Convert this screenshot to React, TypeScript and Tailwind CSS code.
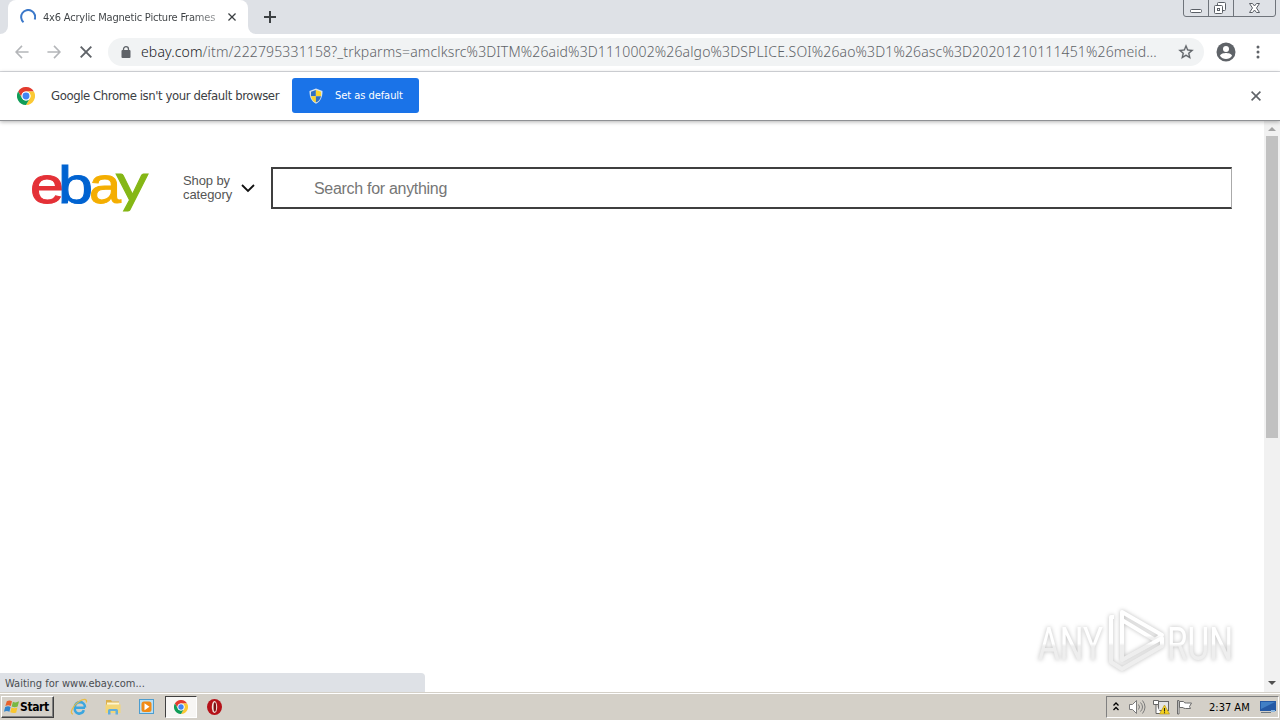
import type { ReactNode } from 'react';

interface IconProps {
  className?: string;
}

const TAHOMA = "font-['DejaVu_Sans_Condensed','Noto_Sans',sans-serif]";

function ChromeLogo({ className }: IconProps) {
  const blade = 'M22.4 6A12 12 0 0 0 1.6 6L6.8 15A6 6 0 0 1 12 6Z';
  return (
    <svg viewBox="0 0 24 24" className={className}>
      <path d={blade} fill="#e33b2e" />
      <path d={blade} fill="#fbc934" transform="rotate(120 12 12)" />
      <path d={blade} fill="#109d58" transform="rotate(240 12 12)" />
      <circle cx="12" cy="12" r="6" fill="#fff" />
      <circle cx="12" cy="12" r="4.6" fill="#4285f4" />
    </svg>
  );
}

function Cross({ className }: IconProps) {
  return (
    <svg viewBox="0 0 12 12" className={className} fill="none" stroke="currentColor" strokeWidth="1.9">
      <path d="M.7.7l10.600 10.600M11.300.7L.7 11.300" />
    </svg>
  );
}

function Arrow({ className }: IconProps) {
  return (
    <svg viewBox="0 0 16 16" className={className} fill="none" stroke="currentColor" strokeWidth="1.8">
      <path d="M15.500 8H2M8 1L1.200 8L8 15" />
    </svg>
  );
}

function Shield() {
  return (
    <svg viewBox="0 0 16 16" className="h-4 w-4">
      <path d="M8 .5L14.500 3C14.600 9 12.500 13.500 8 15.800C3.500 13.500 1.400 9 1.500 3Z" fill="#d9e4ee" />
      <path d="M7.900 2L3 3.700L2.900 8.200H7.900Z" fill="#2f6fc4" />
      <path d="M7.900 2L13 3.700L13.100 8.200H7.900Z" fill="#fbd42c" />
      <path d="M7.900 8.200H3C3.600 11.200 5 13.200 7.900 14.500Z" fill="#fbd42c" />
      <path d="M7.900 8.200H13C12.400 11.200 11 13.200 7.900 14.500Z" fill="#2f6fc4" />
    </svg>
  );
}

function WindowControls() {
  return (
    <svg viewBox="0 0 94 18" className="h-[18px] w-[94px]" fill="none" stroke="#6f747b">
      <path d="M.5 0V14Q.5 16.500 3 16.500H90Q92.500 16.500 92.500 14V0M25.500 0V16M50.500 0V16" />
      <rect x="7.500" y="9.500" width="11" height="3" rx="1" fill="#fff" stroke="#5a5f66" />
      <g stroke="#5a5f66" fill="#fff">
        <rect x="34.500" y="2.500" width="8" height="8" rx="1" />
        <rect x="31.500" y="5.500" width="8" height="8" rx="1" />
        <rect x="34.500" y="8.500" width="2" height="2" />
      </g>
      <path d="M66.500 3.500h3l2 2.500 2-2.500h3l-3 4.500 3 4.500h-3l-2-2.500-2 2.500h-3l3-4.500z" fill="#fff" stroke="#5a5f66" />
    </svg>
  );
}

function TabStrip() {
  return (
    <div className="flex h-[34px] shrink-0 justify-between bg-[#dee1e6]">
      <div className="flex">
        <div className="w-2 bg-white">
          <div className="h-full rounded-br-lg bg-[#dee1e6]" />
        </div>
        <div className="flex w-60 items-center rounded-t-lg bg-white pl-3">
          <svg viewBox="0 0 16 16" className="h-4 w-4" fill="none" stroke="#3b78c9" strokeWidth="2">
            <path d="M3.500 13.200A7 7 0 1 1 14.700 10.500" />
          </svg>
          <span className={`mt-0.5 ml-[7px] w-[185px] bg-linear-to-r from-[#3c4043] from-80% to-[#a0a2a4] to-94% bg-clip-text text-[11px] tracking-[-0.2px] whitespace-nowrap text-transparent ${TAHOMA}`}>
            4x6 Acrylic Magnetic Picture Frames
          </span>
          <Cross className="h-2 w-2 text-[#3c4043]" />
        </div>
        <div className="w-2 bg-white">
          <div className="h-full rounded-bl-lg bg-[#dee1e6]" />
        </div>
        <svg viewBox="0 0 12 12" className="mt-[11px] ml-2 h-3 w-3" stroke="#3c4043" strokeWidth="2">
          <path d="M0 6h12M6 0v12" />
        </svg>
      </div>
      <div className="mr-[3px]">
        <WindowControls />
      </div>
    </div>
  );
}

function Toolbar() {
  return (
    <div className="flex h-[38px] shrink-0 items-center border-b border-[#dadce0] bg-white pb-px">
      <Arrow className="ml-[15px] h-3.5 w-3.5 text-[#b4b6b9]" />
      <Arrow className="ml-[18px] h-3.5 w-3.5 rotate-180 text-[#b4b6b9]" />
      <Cross className="ml-[19px] h-3 w-3 text-[#5f6368]" />
      <div className="ml-4 flex h-7 w-[1096px] items-center rounded-full bg-[#f1f3f4]">
        <svg viewBox="0 0 10 12" className="ml-[13px] h-3 w-2.5">
          <rect x="0.500" y="4" width="9" height="8" rx="1" fill="#5f6368" />
          <path d="M2.500 5V3.200a2.500 2.500 0 0 1 5 0V5" fill="none" stroke="#5f6368" strokeWidth="1.300" />
        </svg>
        <span className="mb-px ml-[10px] w-[1024px] font-['Noto_Sans',sans-serif] text-[14px] font-light tracking-[0.14px] whitespace-nowrap text-[#5f6368]">
          <span className="text-[#202124]">ebay.com</span>
          /itm/222795331158?_trkparms=amclksrc%3DITM%26aid%3D1110002%26algo%3DSPLICE.SOI%26ao%3D1%26asc%3D20201210111451%26meid...
        </span>
        <svg viewBox="0 0 24 24" className="ml-3 h-[18px] w-[18px]" fill="#5f6368" stroke="#5f6368" strokeWidth=".3">
          <path d="M22 9.240l-7.190-.62L12 2 9.190 8.630 2 9.240l5.460 4.730L5.820 21 12 17.270 18.180 21l-1.630-7.030L22 9.240zM12 15.400l-3.760 2.270 1-4.280-3.320-2.880 4.380-.38L12 6.100l1.710 4.040 4.380.38-3.320 2.880 1 4.280L12 15.400z" />
        </svg>
      </div>
      <svg viewBox="0 0 20 20" className="ml-3 h-5 w-5">
        <circle cx="10" cy="10" r="9.500" fill="#5f6368" />
        <circle cx="10" cy="7" r="3" fill="#fff" />
        <path d="M4 13.800C4.500 11.600 8 11 10 11s5.500.6 6 2.800C14.500 16 12.500 17 10 17s-4.500-1-6-3.200z" fill="#fff" />
      </svg>
      <svg viewBox="0 0 4 14" className="ml-5 h-3.5 w-1" fill="#5f6368">
        <circle cx="2" cy="2" r="1.500" />
        <circle cx="2" cy="7" r="1.500" />
        <circle cx="2" cy="12" r="1.500" />
      </svg>
    </div>
  );
}

function InfoBar() {
  return (
    <div className="relative z-10 flex h-[49px] shrink-0 items-center border-b border-[#8f9194] bg-white pb-px shadow-[0_1px_4px_rgba(0,0,0,0.3)]">
      <ChromeLogo className="mt-px ml-[17px] h-[18px] w-[18px]" />
      <span className={`ml-4 w-[241px] text-[13px] tracking-[-0.41px] whitespace-nowrap text-[#3c4043] ${TAHOMA}`}>
        Google Chrome isn't your default browser
      </span>
      <button className={`flex h-[35px] w-[127px] items-center rounded-[3px] bg-[#1a73e8] pl-4 text-[11px] tracking-[-0.05px] text-white ${TAHOMA}`}>
        <Shield />
        <span className="mt-0.5 ml-[11px] whitespace-nowrap">Set as default</span>
      </button>
      <Cross className="mt-px mr-[19px] ml-auto h-2.5 w-2.5 text-[#5f6368]" />
    </div>
  );
}

function EbayLogo() {
  return (
    <svg viewBox="-4 -16 128 78" className="h-[78px] w-[128px] font-['Liberation_Sans',sans-serif] text-[52px]" strokeWidth="1">
      <text x="-2" y="40.500" textLength="34" lengthAdjust="spacingAndGlyphs" fill="#e43137" stroke="#e43137">e</text>
      <text x="26" y="40.500" textLength="35" lengthAdjust="spacingAndGlyphs" fill="#0063d1" stroke="#0063d1">b</text>
      <text x="57" y="40.500" textLength="32" lengthAdjust="spacingAndGlyphs" fill="#f4ae01" stroke="#f4ae01">a</text>
      <text x="83.500" y="40" textLength="33" lengthAdjust="spacingAndGlyphs" fill="#85b716" stroke="#85b716" className="font-['Lato',sans-serif] text-[54px]">y</text>
    </svg>
  );
}

function AnyRunMark() {
  return (
    <div className="absolute top-[485px] left-[1034px]">
      <svg viewBox="0 0 210 74" className="h-[74px] w-[210px] drop-shadow-[0_0_2px_rgba(0,0,0,0.26)]">
        <defs>
          <linearGradient id="mark" x1="0" y1="0" x2="0" y2="1">
            <stop offset="0.5" stopColor="#ffffff" />
            <stop offset="0.55" stopColor="#eeeeee" />
          </linearGradient>
        </defs>
        <g className="font-['Roboto',sans-serif] text-[47px]" fill="url(#mark)">
          <text x="4" y="54" textLength="65" lengthAdjust="spacingAndGlyphs">ANY</text>
          <text x="133" y="54" textLength="66" lengthAdjust="spacingAndGlyphs">RUN</text>
        </g>
        <g fill="none" stroke="url(#mark)" strokeWidth="4" strokeLinejoin="round">
          <path d="M88 53V6L128 29L121 34L88 14" />
          <path d="M80 11H77V56L88 63L128 40V32L88 54V14" />
        </g>
      </svg>
    </div>
  );
}

function Scrollbar() {
  return (
    <div className="flex w-4 shrink-0 flex-col items-center bg-[#f1f1f1]">
      <svg viewBox="0 0 16 15" className="h-[15px] w-4" fill="#a3a3a3">
        <path d="M4 10h8L8 6z" />
      </svg>
      <div className="h-[302px] w-3 bg-[#c1c1c1]" />
      <svg viewBox="0 0 16 16" className="mt-auto h-4 w-4" fill="#505050">
        <path d="M4 5h8l-4 4z" />
      </svg>
    </div>
  );
}

function Page() {
  return (
    <div className="relative flex min-h-0 flex-1 bg-white">
      <div className="flex flex-1 flex-col justify-between">
        <div className="flex items-start pt-[25px] pl-7">
          <EbayLogo />
          <div className="mt-[28px] ml-[27px] w-[50px] font-['Liberation_Sans',sans-serif] text-[13px] leading-[14px] tracking-[-0.1px] text-[#555]">
            Shop by category
          </div>
          <svg viewBox="0 0 14 9" className="mt-[38px] ml-[8px] h-[9px] w-3.5" fill="none" stroke="#111" strokeWidth="1.800">
            <path d="M1 1l6 6 6-6" />
          </svg>
          <div className="mt-[21px] ml-[16px] flex h-[42px] w-[961px] items-center border-2 border-r border-[#3f3f3f] border-r-[#aaa] pt-0.5 pl-[41px] font-['Liberation_Sans',sans-serif] text-[16px] tracking-[-0.3px] text-[#767676]">
            Search for anything
          </div>
        </div>
        <div className={`flex h-[19px] w-[425px] items-center rounded-tr bg-[#dee1e6] pt-[3px] pl-[5px] text-[11px] whitespace-nowrap text-[#4a4d51] ${TAHOMA}`}>
          Waiting for www.ebay.com...
        </div>
      </div>
      <Scrollbar />
      <AnyRunMark />
    </div>
  );
}

function WindowsFlag() {
  return (
    <svg viewBox="0 0 18 16" className="h-4 w-[17px]">
      <path d="M4 2Q7 0 9.500 2L8.300 7Q5.500 5.500 2.500 7Z" fill="#e8622c" />
      <path d="M10.500 2.500Q13.500 4 17 2L15.500 7.500Q12.500 9 9.200 7.500Z" fill="#78b843" />
      <path d="M2.300 8Q5.500 6.500 8 8L6.800 13Q4 11.500 1 13Z" fill="#3285cd" />
      <path d="M9 8.500Q12 10 15.200 8.500L14 13.800Q11 15 7.700 13.500Z" fill="#f9c62e" />
    </svg>
  );
}

function ExplorerIcon() {
  return (
    <svg viewBox="0 0 18 18" className="h-[18px] w-[18px]" fill="none">
      <path d="M15 9.800H5A4.500 4.500 0 0 0 13.800 12.200M4.800 9A5 5 0 0 1 15 9.500" stroke="#3ba6df" strokeWidth="2.600" />
      <path d="M3 16C-1 16 3 7 9 3.500C14 .5 17.500.8 16.300 4.500" stroke="#e8bd47" strokeWidth="1.300" />
    </svg>
  );
}

function FolderIcon() {
  return (
    <svg viewBox="0 0 18 18" className="h-[18px] w-[18px]">
      <path d="M2 2h5l1 1.500h7V15H2z" fill="#dcb04c" />
      <path d="M3 4.500h12V9H3z" fill="#fff6cf" />
      <path d="M1.500 6.500h15V15h-15z" fill="#f3d678" />
      <path d="M4 16.500V12.500Q4 11 5.500 11h7Q14 11 14 12.500v4h-2.500V13h-5v3.500z" fill="#62aedb" />
    </svg>
  );
}

function MediaIcon() {
  return (
    <svg viewBox="0 0 18 18" className="h-[18px] w-[18px]">
      <rect x="1.500" y="1.500" width="14" height="14" fill="#b9dff3" stroke="#4d9dcf" />
      <rect x="3.500" y="3.500" width="10" height="10.500" rx="2.500" fill="#f18a15" />
      <path d="M6.500 5.200v7l5-3.500z" fill="#fff" />
    </svg>
  );
}

function OperaIcon() {
  return (
    <svg viewBox="0 0 18 18" className="h-[18px] w-[18px]">
      <ellipse cx="8.500" cy="9" rx="7.500" ry="8" fill="#b51219" />
      <ellipse cx="8.500" cy="9" rx="2.700" ry="6" fill="#f4e4de" />
      <ellipse cx="8.800" cy="9" rx="1.300" ry="4.800" fill="#7c1316" />
    </svg>
  );
}

interface TaskItem {
  name: string;
  icon: ReactNode;
  active?: boolean;
}

const TASKS: TaskItem[] = [
  { name: 'explorer', icon: <ExplorerIcon /> },
  { name: 'folder', icon: <FolderIcon /> },
  { name: 'media', icon: <MediaIcon /> },
  { name: 'chrome', icon: <ChromeLogo className="h-3.5 w-3.5" />, active: true },
  { name: 'opera', icon: <OperaIcon /> },
];

function Tray() {
  return (
    <div className="mr-px flex h-[22px] w-[173px] items-center border border-t-[#808080] border-r-white border-b-white border-l-[#808080] pl-[6px]">
      <svg viewBox="0 0 6 9" className="mb-0.5 h-[9px] w-[6px]" fill="none" stroke="#000" strokeWidth="1.300">
        <path d="M.5 3.500L3 1l2.500 2.500M.5 8L3 5.500 5.500 8" />
      </svg>
      <svg viewBox="0 0 17 16" className="ml-2.5 h-4 w-[17px]" fill="none" stroke="#7b7b7b">
        <path d="M.5 5.500h3L7.500 1.500v13L3.500 10.500h-3z" fill="#fff" />
        <path d="M9.500 5.500q2 2.500 0 5M11.500 3.500q4 4.500 0 9M13.500 1.500q5 6.500 0 13" />
      </svg>
      <svg viewBox="0 0 17 16" className="ml-[7px] h-4 w-[17px]">
        <rect x="5.500" y="2.500" width="10" height="9" fill="#e4e4e4" stroke="#666" />
        <path d="M.5 1.500h5v4h-5zM3 5.500V14.500h5" fill="#fff" stroke="#666" />
        <path d="M11.500 6L16.500 15H6.500z" fill="#f5d21f" stroke="#ac8d17" strokeWidth=".6" />
        <path d="M11.500 9v3.500M11.500 13.300v1" stroke="#222" strokeWidth="1.100" />
      </svg>
      <svg viewBox="0 0 17 16" className="ml-[7px] h-4 w-[17px]" fill="#fff" stroke="#6b6b6b">
        <path d="M.5 1.500H2V15H.5zM2.500 2.500h4q1 2 3 1.500h5l-2 3.500 1 2h-5q-2 0-2.500-1h-3.500z" />
      </svg>
      <span className={`mt-0.5 ml-[15px] w-[51px] text-[11px] whitespace-nowrap text-black ${TAHOMA}`}>2:37 AM</span>
      <svg viewBox="0 0 16 14" className="h-3.5 w-4">
        <path d="M0 1h16v10H0z" fill="#2459a5" />
        <path d="M1 2h14L1 9z" fill="#407fc5" />
        <path d="M1 12h10v1H1z" fill="#6c7780" />
        <path d="M11 10h4v2h-4z" fill="#8eb8df" />
      </svg>
    </div>
  );
}

function Taskbar() {
  return (
    <div className="flex h-7 shrink-0 items-center justify-between border-t border-[#d4d0c8] bg-[#d4d0c8] pt-px shadow-[inset_0_1px_0_#fff]">
      <div className="flex items-center">
        <button className={`ml-px flex h-[22px] w-[53px] items-center border border-t-white border-r-[#404040] border-b-[#404040] border-l-white pl-px text-[12px] font-bold tracking-[-0.4px] text-black shadow-[inset_-1px_-1px_0_#808080] ${TAHOMA}`}>
          <WindowsFlag />
          Start
        </button>
        <div className="ml-[9px] flex items-center gap-0.5">
          {TASKS.map(t => (
            <div
              key={t.name}
              className={`flex h-[22px] w-8 items-center justify-center ${
                t.active ? 'border border-t-[#404040] border-r-white border-b-white border-l-[#404040] bg-[#f7f6f4]' : ''
              }`}
            >
              {t.icon}
            </div>
          ))}
        </div>
      </div>
      <Tray />
    </div>
  );
}

export default function App() {
  return (
    <div className="flex h-screen w-full flex-col overflow-hidden bg-white">
      <TabStrip />
      <Toolbar />
      <InfoBar />
      <Page />
      <Taskbar />
    </div>
  );
}
